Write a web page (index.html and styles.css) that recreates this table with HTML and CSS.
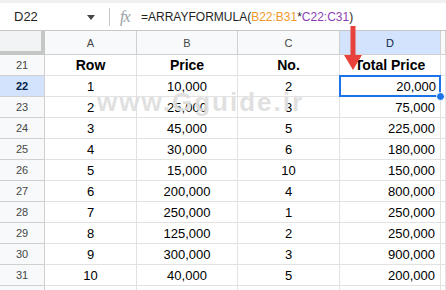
FILE: index.html
```html
<!DOCTYPE html>
<html>
<head>
<meta charset="utf-8">
<link rel="stylesheet" href="styles.css">
</head>
<body>
<div class="sheet">
  <div class="topstrip"></div>
  <div class="fbar">
    <div class="namebox">D22</div>
    <svg class="caret" width="8" height="5" viewBox="0 0 8 5"><path d="M0 0 L8 0 L4 5 Z" fill="#444746"/></svg>
    <div class="sep"></div>
    <div class="fx">fx</div>
    <div class="formula">=ARRAYFORMULA(<span class="ref1">B22:B31</span>*<span class="ref2">C22:C31</span>)</div>
  </div>
  <div class="grid">
    <div class="corner"></div>
    <div class="ch">A</div><div class="ch">B</div><div class="ch">C</div><div class="ch sel">D</div><div class="ch"></div>

    <div class="rh">21</div><div class="c hd">Row</div><div class="c hd">Price</div><div class="c hd">No.</div><div class="c hd">Total Price</div><div class="c"></div>
    <div class="rh sel">22</div><div class="c">1</div><div class="c">10,000</div><div class="c">2</div><div class="c r active">20,000</div><div class="c"></div>
    <div class="rh">23</div><div class="c">2</div><div class="c">25,000</div><div class="c">3</div><div class="c r">75,000</div><div class="c"></div>
    <div class="rh">24</div><div class="c">3</div><div class="c">45,000</div><div class="c">5</div><div class="c r">225,000</div><div class="c"></div>
    <div class="rh">25</div><div class="c">4</div><div class="c">30,000</div><div class="c">6</div><div class="c r">180,000</div><div class="c"></div>
    <div class="rh">26</div><div class="c">5</div><div class="c">15,000</div><div class="c">10</div><div class="c r">150,000</div><div class="c"></div>
    <div class="rh">27</div><div class="c">6</div><div class="c">200,000</div><div class="c">4</div><div class="c r">800,000</div><div class="c"></div>
    <div class="rh">28</div><div class="c">7</div><div class="c">250,000</div><div class="c">1</div><div class="c r">250,000</div><div class="c"></div>
    <div class="rh">29</div><div class="c">8</div><div class="c">125,000</div><div class="c">2</div><div class="c r">250,000</div><div class="c"></div>
    <div class="rh">30</div><div class="c">9</div><div class="c">300,000</div><div class="c">3</div><div class="c r">900,000</div><div class="c"></div>
    <div class="rh">31</div><div class="c">10</div><div class="c">40,000</div><div class="c">5</div><div class="c r">200,000</div><div class="c"></div>
    <div class="rh"></div><div class="c"></div><div class="c"></div><div class="c"></div><div class="c"></div><div class="c"></div>
  </div>
  <svg class="arrow" width="20" height="46" viewBox="0 0 20 46">
    <rect x="7.5" y="0" width="5" height="32" fill="#e8413b"/>
    <path d="M1 29 L19 29 L10 44 Z" fill="#e8413b"/>
  </svg>
  <div class="watermark">www.Gguide.ir</div>
</div>
</body>
</html>
```
FILE: styles.css
```css
html, body {
  margin: 0;
  padding: 0;
  background: #ffffff;
}
.sheet {
  position: relative;
  width: 446px;
  height: 290px;
  overflow: hidden;
  font-family: "Liberation Sans", Arial, sans-serif;
  color: #000;
}
.topstrip {
  height: 3px;
  background: #eef0f2;
}
.fbar {
  height: 27px;
  border-bottom: 1px solid #c7c7c7;
  display: flex;
  align-items: center;
  background: #fff;
}
.namebox {
  width: 73px;
  padding-left: 14px;
  font-size: 13px;
  color: #1f1f1f;
}
.caret {
  margin-top: 1px;
}
.sep {
  width: 1px;
  height: 18px;
  background: #c7c7c7;
  margin-left: 14px;
}
.fx {
  margin-left: 10px;
  font-family: "Liberation Serif", serif;
  font-style: italic;
  font-size: 16px;
  color: #9aa0a6;
  width: 21px;
  letter-spacing: -1px;
}
.formula {
  margin-left: 0;
  font-size: 12px;
  color: #1f1f1f;
  white-space: nowrap;
}
.ref1 { color: #f09a2a; }
.ref2 { color: #8d3fb4; }
.grid {
  display: grid;
  grid-template-columns: 45px 92px 101px 102px 101px 1fr;
  grid-auto-rows: 21px;
  grid-template-rows: 24px;
}
.corner {
  background: #f1f3f4;
  border-right: 4px solid #c4c7c5;
  border-bottom: 4px solid #c4c7c5;
  box-sizing: border-box;
}
.ch {
  box-sizing: border-box;
  background: #f8f9fa;
  border-right: 1px solid #d0d0d0;
  border-bottom: 1px solid #d0d0d0;
  display: flex;
  align-items: center;
  justify-content: center;
  font-size: 11px;
  color: #444746;
}
.ch.sel {
  background: #d3e3fd;
  color: #0b1f45;
}
.rh {
  box-sizing: border-box;
  background: #f8f9fa;
  border-right: 1px solid #d0d0d0;
  border-bottom: 1px solid #d0d0d0;
  display: flex;
  align-items: center;
  justify-content: center;
  font-size: 11px;
  color: #444746;
}
.rh.sel {
  background: #d3e3fd;
  color: #041e49;
  font-weight: bold;
}
.c {
  box-sizing: border-box;
  border-right: 1px solid #e2e2e2;
  border-bottom: 1px solid #e2e2e2;
  display: flex;
  align-items: center;
  justify-content: center;
  font-size: 13px;
  color: #000;
  white-space: nowrap;
}
.c.hd {
  font-weight: bold;
  font-size: 14px;
}
.c.r {
  justify-content: flex-end;
  padding-right: 5px;
}
.c.active {
  position: relative;
  border: 2px solid #1a73e8;
  margin: -1px 0 0 -1px;
  padding-right: 3px;
}
.c.active::after {
  content: "";
  position: absolute;
  right: -6px;
  bottom: -6px;
  width: 7px;
  height: 7px;
  border-radius: 50%;
  background: #1a73e8;
  border: 1px solid #fff;
}
.arrow {
  position: absolute;
  left: 343px;
  top: 26px;
}
.watermark {
  position: absolute;
  left: 97px;
  top: 87px;
  font-size: 26px;
  font-weight: bold;
  letter-spacing: 2px;
  color: rgba(180, 180, 180, 0.42);
  text-shadow: 0 0 1px rgba(255, 255, 255, 0.9);
  pointer-events: none;
}
```
